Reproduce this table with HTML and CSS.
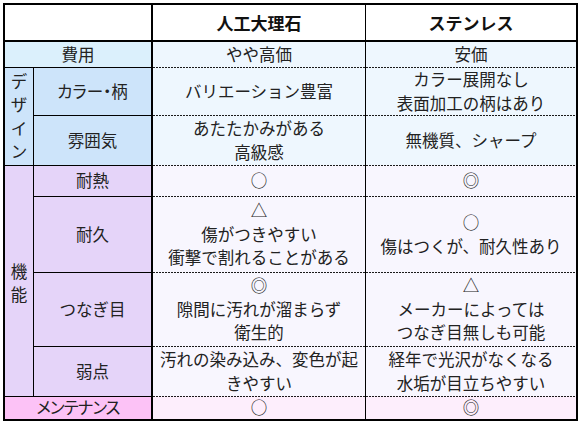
FILE: index.html
```html
<!DOCTYPE html>
<html lang="ja">
<head>
<meta charset="utf-8">
<link rel="stylesheet" href="styles.css">
</head>
<body>
<div class="sheet">
  <div class="c span2 corner"></div>
  <div class="c head da">人工大理石</div>
  <div class="c head db">ステンレス</div>

  <div class="c span2 lb-cost top2">費用</div>
  <div class="c da top2 blue">やや高価</div>
  <div class="c db top2 blue">安価</div>

  <div class="c grp lb-design vert"><span>デ</span><span>ザ</span><span>イ</span><span>ン</span></div>
  <div class="c sub lb-design narrow">カラー・柄</div>
  <div class="c da dash blue">バリエーション豊富</div>
  <div class="c db dash blue">カラー展開なし<br>表面加工の柄はあり</div>

  <div class="c sub lb-design">雰囲気</div>
  <div class="c da dash blue">あたたかみがある<br>高級感</div>
  <div class="c db dash blue">無機質、シャープ</div>

  <div class="c grp lb-func vert func"><span>機</span><span>能</span></div>
  <div class="c sub lb-func">耐熱</div>
  <div class="c da dash lav">○</div>
  <div class="c db dash lav">◎</div>

  <div class="c sub lb-func">耐久</div>
  <div class="c da dash lav">△<br>傷がつきやすい<br>衝撃で割れることがある</div>
  <div class="c db dash lav">○<br>傷はつくが、耐久性あり</div>

  <div class="c sub lb-func">つなぎ目</div>
  <div class="c da dash lav">◎<br>隙間に汚れが溜まらず<br>衛生的</div>
  <div class="c db dash lav">△<br>メーカーによっては<br>つなぎ目無しも可能</div>

  <div class="c sub lb-func">弱点</div>
  <div class="c da dash lav">汚れの染み込み、変色が起<br>きやすい</div>
  <div class="c db dash lav">経年で光沢がなくなる<br>水垢が目立ちやすい</div>

  <div class="c span2 lb-maint top1 narrow tight">メンテナンス</div>
  <div class="c da dash pink">○</div>
  <div class="c db dash pink">◎</div>
</div>
</body>
</html>
```

FILE: styles.css
```css
body {
  margin: 0;
  background: #ffffff;
  font-family: "Noto Sans CJK JP", "Noto Sans", sans-serif;
}

.sheet {
  margin: 3px 0 0 3px;
  width: 575px;
  box-sizing: border-box;
  border: 2px solid #000;
  display: grid;
  grid-template-columns: 28px 118px 214px 211px;
  grid-template-rows: 35px 27px 48px 50px 31px 76px 74px 50px 23px;
}

.c {
  box-sizing: border-box;
  display: flex;
  flex-direction: column;
  align-items: center;
  justify-content: center;
  text-align: center;
  font-size: 16.5px;
  line-height: 23.5px;
  color: #222;
  white-space: nowrap;
  --fill: #ffffff;
  background-color: var(--fill);
}

.span2 { grid-column: span 2; }

.corner { background: #ffffff; }

.head {
  font-weight: bold;
  font-size: 17px;
  color: #111;
  background: #ffffff;
}

.narrow { font-feature-settings: "palt"; }
.tight { letter-spacing: -1px; }

.da { border-left: 2px solid #000; }
.db { border-left: 1px solid #000; }

.top2 { border-top: 2px solid #000; }
.top1 { border-top: 1px solid #000; }

.grp {
  border-top: 1px solid #000;
}
.lb-design.grp { grid-row: span 2; }
.lb-func.grp { grid-row: span 4; }

.sub {
  border-left: 1px solid #000;
  border-top: 1px solid #000;
}

.vert span {
  display: block;
  line-height: 23.5px;
}
.func { padding-top: 4px; }

.dash {
  padding-top: 1px;
  background-image: repeating-linear-gradient(90deg, #1a1a1a 0 2px, transparent 2px 3px);
  background-size: 100% 1px;
  background-position: top left;
  background-repeat: no-repeat;
}

.lb-cost { --fill: #dbf0fc; }
.lb-design { --fill: #cde4fa; }
.blue { --fill: #eef7fe; }
.lb-func { --fill: #e5d4f9; }
.lav { --fill: #f8f6fe; }
.lb-maint { --fill: #fcc2f6; }
.pink { --fill: #fdeefc; }
```
